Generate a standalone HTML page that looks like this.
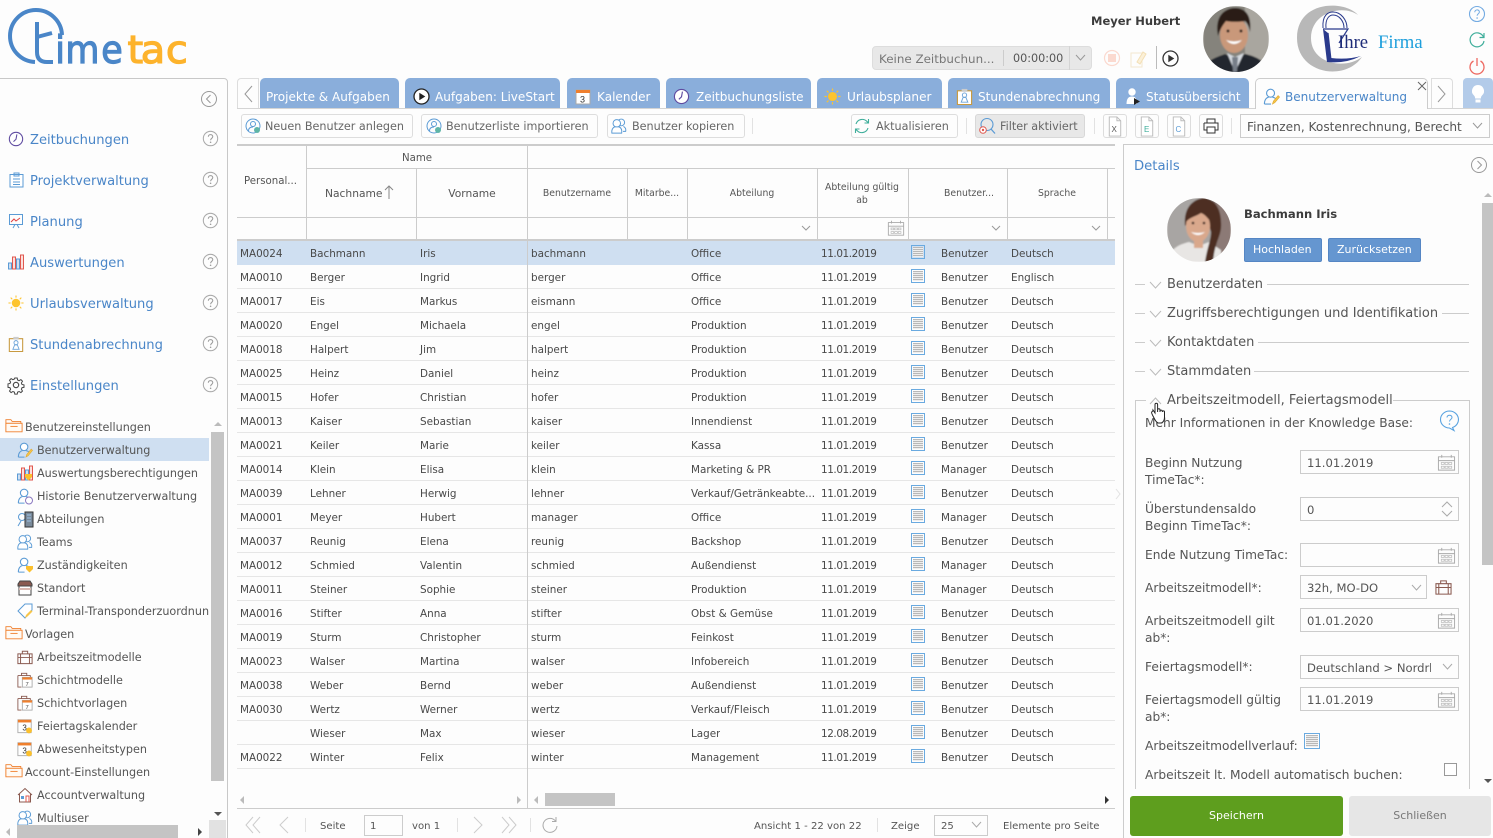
<!DOCTYPE html>
<html lang="de"><head><meta charset="utf-8"><title>TimeTac</title>
<style>
*{box-sizing:border-box}
html,body{margin:0;padding:0}
html{width:1493px;height:838px;overflow:hidden}
body{position:relative;width:1493px;height:838px;overflow:hidden;background:#fdfdfd;font-family:"DejaVu Sans","Liberation Sans",sans-serif;color:#444;font-size:11px}
.t{position:absolute;white-space:nowrap;line-height:16px;height:16px;margin-top:1px}
.b{position:absolute}
svg{position:absolute;overflow:visible}
.nav{font-size:13.1px;color:#4a86c8;left:30px;margin-top:2px}
.tr1{left:25px;font-size:11.2px;color:#555}
.tr2{left:37px;font-size:11.2px;color:#555}
.tab{position:absolute;top:78px;height:30px;background:#8aaedb;border-radius:5px 5px 0 0}
.tt{position:absolute;top:89px;color:#fff;font-size:12.05px;line-height:16px;white-space:nowrap}
.btn{position:absolute;top:114px;height:24px;border:1px solid #ddd;border-radius:3px;background:#fdfdfd}
.bt{font-size:11.2px;color:#666;top:118px}
.sep{position:absolute;width:1px;background:#e2e2e2}
.hl{position:absolute;height:1px;background:#ccc}
.vl{position:absolute;width:1px;background:#ccc}
.h{font-size:9.6px;color:#555;text-align:center;transform:translateX(-50%)}
.r{position:absolute;left:237px;width:878px;height:24px;border-bottom:1px solid #e6e6e6;font-size:10.4px;color:#484848}
.r span{position:absolute;top:4px;margin-top:1px;line-height:16px;white-space:nowrap}
.r span:nth-child(1){left:3px}
.r span:nth-child(2){left:73px}
.r span:nth-child(3){left:183px}
.r span:nth-child(4){left:294px}
.r span:nth-child(5){left:454px;max-width:124px;overflow:hidden}
.r span:nth-child(6){left:584px;letter-spacing:-.4px}
.r span:nth-child(7){left:674px;top:3px;width:14px;height:14px;border:1.4px solid #6aaae0;background:repeating-linear-gradient(#eee 0 1px,#b8b8b8 1px 2px);background-clip:content-box;padding:1px}
.r span:nth-child(8){left:704px}
.r span:nth-child(9){left:774px}
.sel{background:#cfdff1;border-bottom:0}
.sec{font-size:13px;color:#555;left:1167px}
.lb{font-size:12.2px;color:#555;left:1145px;line-height:17px;white-space:nowrap;position:absolute;margin-top:1px}
.in{position:absolute;left:1300px;width:159px;height:24px;border:1px solid #ccc;background:#fdfdfd;font-size:11.6px;color:#555;padding:0 6px;line-height:24px;white-space:nowrap;overflow:hidden}
.pg{font-size:10.1px;color:#555;top:817px;margin-top:2px}
</style></head>
<body>
<svg width="0" height="0" style="position:absolute">
<defs>
<filter id="soft"><feGaussianBlur stdDeviation=".7"/></filter>
<symbol id="q" viewBox="0 0 18 18"><circle cx="9" cy="9" r="7.6" fill="none" stroke="#aaa" stroke-width="1.1"/><path d="M6.7 7.2c0-3 4.7-3 4.7-.2 0 1.800-2.300 1.800-2.300 3.900" fill="none" stroke="#999" stroke-width="1.100"/><circle cx="9.100" cy="13" r=".8" fill="#999"/></symbol>
<symbol id="cal" viewBox="0 0 20 20"><path d="M1.500 4h17v14h-17zM1.500 8h17M5 2v3M15 2v3" fill="none" stroke="#aaa" stroke-width="1"/><path d="M4.500 10h3v2h-3zM8.500 10h3v2h-3zM12.500 10h3v2h-3zM4.500 14h3v2h-3zM8.500 14h3v2h-3zM12.500 14h3v2h-3z" fill="none" stroke="#bbb" stroke-width=".8"/></symbol>
<symbol id="u" viewBox="0 0 18 18"><circle cx="8" cy="5.500" r="4.200" fill="#fff" stroke="#5b9bd5" stroke-width="1.200"/><path d="M1.500 17c0-5 2.500-7 4.500-7.300M10 9.700c2 .3 4 1.500 4.500 3.500M1.500 17h7" fill="none" stroke="#5b9bd5" stroke-width="1.200"/></symbol>
<symbol id="uu" viewBox="0 0 18 18"><circle cx="11.500" cy="5" r="3.800" fill="none" stroke="#5b9bd5" stroke-width="1.100"/><path d="M14 9.500c2 1 3 3 2.500 5.500h-3" fill="none" stroke="#5b9bd5" stroke-width="1.100"/><circle cx="6.500" cy="6" r="4.200" fill="#fff" stroke="#5b9bd5" stroke-width="1.100"/><path d="M1 17c-.5-4 1-6 3-7h5c2.500 1 3.500 3.500 3 7z" fill="#fff" stroke="#5b9bd5" stroke-width="1.100"/></symbol>
<symbol id="pen" viewBox="0 0 18 18"><path d="M10 17l1-3 5-6 1.500 1.500-5 6z" fill="#f7c64a" stroke="#e0a930" stroke-width=".7"/></symbol>
<symbol id="fo" viewBox="0 0 20 16"><path d="M1 15V1.500h5.500L8 3.500h9.500V5" fill="none" stroke="#ef7f2d" stroke-width="1"/><path d="M1 5.500h18V15H1z" fill="#fffaf4" stroke="#ef7f2d" stroke-width="1"/><path d="M6 9h8" stroke="#ef7f2d" stroke-width="1"/></symbol>
<symbol id="case" viewBox="0 0 18 16"><path d="M1 4.500h16v11H1zM6 4.500V1.500h6v3M1 8.500h16M4 4.500v11M14 4.500v11" fill="none" stroke="#8a5a50" stroke-width="1.100"/></symbol>
<symbol id="sch" viewBox="0 0 18 18"><path d="M1 4h14v3M1 4v13h4M5 4V1.500h6V4" fill="none" stroke="#8a5a50" stroke-width="1"/><rect x="6" y="6" width="11" height="11" fill="#fff" stroke="#aaa"/><rect x="6" y="6" width="11" height="2.500" fill="#ef7f2d"/><text x="9.500" y="15.500" font-size="6.500" fill="#444" font-family="Liberation Sans">7</text></symbol>
<symbol id="fei" viewBox="0 0 18 18"><rect x="1" y="2" width="15" height="14.500" fill="#fff" stroke="#aaa"/><rect x="1" y="2" width="15" height="3" fill="#ef7f2d"/><text x="6" y="14" font-size="9" fill="#333" font-family="Liberation Sans">3</text><circle cx="13.500" cy="14" r="3.300" fill="#fbc02d"/></symbol>
<symbol id="doc" viewBox="0 0 18 22"><path d="M3 1h8l4 4v16H3z" fill="#fff" stroke="#bbb"/><path d="M11 1v4h4" fill="none" stroke="#bbb"/></symbol>
<symbol id="sun" viewBox="0 0 18 18"><circle cx="9" cy="9" r="4.800" fill="#fdc42d"/><path d="M9 .5v2.500M9 15v2.500M.5 9H3M15 9h2.500M3 3l1.800 1.800M13.200 13.200L15 15M3 15l1.800-1.800M13.200 4.800L15 3" stroke="#fdc42d" stroke-width="1.200"/></symbol>
<symbol id="clk" viewBox="0 0 18 18"><circle cx="9" cy="9" r="7.500" fill="#fff" stroke="#5f4ba0" stroke-width="1.200"/><path d="M10 3.800L9 9.300 6.200 12" fill="none" stroke="#5f4ba0" stroke-width="1.200"/></symbol>
<symbol id="stu" viewBox="0 0 18 18"><path d="M1.500 3h15v14.500h-15z" fill="#fff" stroke="#c89a40" stroke-width="1.200"/><rect x="6" y="1" width="6" height="3" fill="#ccc"/><circle cx="9" cy="7.500" r="2.300" fill="none" stroke="#6ba3d8"/><path d="M5.500 15l2-5h3l2 5z" fill="none" stroke="#6ba3d8"/></symbol>
</defs></svg>

<!-- logo -->
<svg style="left:0;top:0" width="200" height="75"><path d="M35 62A26 26 0 1 1 62 35" fill="none" stroke="#4a86c8" stroke-width="4"/><path d="M37 22V52q0 10 10 10h6M37 37l15-4" fill="none" stroke="#4a86c8" stroke-width="4"/><text transform="translate(0,63) scale(.92,1)" font-size="38" font-family="DejaVu Sans" stroke-width="1.200" fill="#4a86c8" stroke="#4a86c8" x="60 71 110">ime</text><text transform="translate(0,63) scale(1.05,1)" font-size="38" font-family="DejaVu Sans" stroke-width="1.200" fill="#fdb32c" stroke="#fdb32c" x="121.400 134 158">tac</text></svg>

<!-- top right -->
<span class="t" style="left:1091px;top:12px;font-size:11.500px;font-weight:bold;color:#3c3c3c">Meyer Hubert</span>
<div class="b" style="left:872px;top:46px;width:220px;height:24px;background:#e8e8e8;border:1px solid #ddd;border-radius:4px"></div>
<span class="t" style="left:879px;top:50px;font-size:11.900px;color:#777">Keine Zeitbuchun...</span>
<div class="sep" style="left:1003px;top:50px;height:16px;background:#ccc"></div>
<span class="t" style="left:1013px;top:50px;font-size:11.200px;color:#555">00:00:00</span>
<div class="sep" style="left:1069px;top:46px;height:24px;background:#d4d4d4"></div>
<svg style="left:1075px;top:54px" width="11" height="8"><path d="M1 1l4.500 5L10 1" fill="none" stroke="#999"/></svg>
<svg style="left:1103px;top:49px" width="18" height="18"><circle cx="9" cy="9" r="7.500" fill="none" stroke="#fbd9cf" stroke-width="1.200"/><rect x="5" y="5" width="8" height="8" fill="#fbd9cf"/></svg>
<svg style="left:1129px;top:50px" width="18" height="18"><path d="M2 3h7l4 0v14H2z" fill="none" stroke="#f3e8d0"/><path d="M8 12L14 2l3 2-6 10z" fill="#fbf0d8" stroke="#f3dfb5"/></svg>
<div class="sep" style="left:1156px;top:46px;height:23px;background:#bbb"></div>
<svg style="left:1162px;top:50px" width="17" height="17"><circle cx="8.500" cy="8.500" r="7.500" fill="none" stroke="#333" stroke-width="1.300"/><path d="M6.300 4.800l6 3.700-6 3.700z" fill="#333"/></svg>
<!-- man photo -->
<svg style="left:1203px;top:6px" width="66" height="66"><defs><clipPath id="c1"><circle cx="33" cy="33" r="33"/></clipPath></defs><g clip-path="url(#c1)"><g filter="url(#soft)"><rect width="66" height="66" fill="#85837c"/><rect x="42" width="24" height="66" fill="#a9a69f"/><path d="M-2 68c0-12 16-17 24-20l10 5 10-5c10 2 24 8 24 20z" fill="#23262d"/><path d="M24 47l8 19 9-19-9 4z" fill="#d5dae0"/><path d="M29 51h6l-1 15h-4z" fill="#777e88"/><ellipse cx="31" cy="29" rx="14" ry="18" fill="#c9987a"/><path d="M15 30C11 10 22 2 32 2c11 0 17 8 15 24-1-6-3-9-5-11-6 1-14 1-19 0-3 4-6 8-8 15z" fill="#2c1e18"/><path d="M23 34q8 8 16 0-8 3-16 0z" fill="#fff"/><circle cx="25" cy="25" r="1.500" fill="#2c1e18"/><circle cx="38" cy="25" r="1.500" fill="#2c1e18"/></g></g></svg>
<!-- company logo -->
<svg style="left:1295px;top:2px" width="135" height="90"><path d="M63 13C50-2 2-2 2 36c0 36 48 44 65 19-17 13-51 7-51-19 0-26 32-34 47-23z" fill="#b8b8b8"/><path d="M28 26C27 12 34 10 38 10c8 0 14 8 14 16M31 26c-1-10 4-13 7-13 6 0 11 6 11 13" fill="none" stroke="#2a3a8c" stroke-width="1"/><path d="M28 27h25l-9 14M33 31l3 27" fill="none" stroke="#2a3a8c" stroke-width="1.200"/><path d="M28 27l4 33q18 2 34-6-14 4-30 2l-3-25z" fill="#2a3a8c"/><text x="43" y="46" font-family="Liberation Serif" font-size="18.700" fill="#1d2b78">Ihre</text><text x="83" y="46" font-family="Liberation Serif" font-size="18.700" fill="#1e9fdc">Firma</text></svg>
<svg style="left:1468px;top:5px" width="18" height="18"><circle cx="9" cy="9" r="7.500" fill="none" stroke="#74abe2" stroke-width="1.100"/><path d="M6.800 7.200c0-3 4.600-3 4.600-.2 0 1.800-2.300 1.800-2.300 3.800" fill="none" stroke="#74abe2"/><circle cx="9.100" cy="13" r=".8" fill="#74abe2"/></svg>
<svg style="left:1468px;top:31px" width="18" height="18"><path d="M15.500 6A7 7 0 1 0 16 10M16 2v4.500h-4.500" fill="none" stroke="#3fae9b" stroke-width="1.200"/></svg>
<svg style="left:1468px;top:57px" width="18" height="18"><path d="M5.500 4A7 7 0 1 0 12.500 4M9 1v8" fill="none" stroke="#ee6a62" stroke-width="1.300"/></svg>

<!-- sidebar frame -->
<div class="b" style="left:-4px;top:78px;width:232px;height:770px;border:1px solid #c8c8c8;border-radius:4px"></div>
<svg style="left:201px;top:91px" width="16" height="16"><circle cx="8" cy="8" r="7.500" fill="none" stroke="#999"/><path d="M9.500 4L5.500 8l4 4" fill="none" stroke="#999"/></svg>

<svg style="left:8px;top:131px" width="16" height="16"><use href="#clk"/></svg><span class="t nav" style="top:131px">Zeitbuchungen</span>
<svg style="left:9px;top:172px" width="15" height="16"><path d="M1 2.500h13V15H1zM5 1h5v3H5zM4 7h7M4 10h7M4 12.500h7" fill="#fff" stroke="#5b9bd5"/></svg><span class="t nav" style="top:172px">Projektverwaltung</span>
<svg style="left:8px;top:213px" width="16" height="16"><path d="M1.500 1.500h13v10h-13zM5 15l2-3.500M11 15l-2-3.500" fill="none" stroke="#5b9bd5"/><path d="M3 9l3-3 2 2 4-3" fill="none" stroke="#e04040"/></svg><span class="t nav" style="top:213px">Planung</span>
<svg style="left:8px;top:254px" width="16" height="16"><path d="M.5 9h3v6h-3zM8.500 5h3v10h-3z" fill="#cfdff1" stroke="#5b9bd5"/><path d="M4.500 3h3v12h-3zM12.500 1h3v14h-3z" fill="#fde0dc" stroke="#e0584f"/></svg><span class="t nav" style="top:254px">Auswertungen</span>
<svg style="left:8px;top:295px" width="16" height="16"><use href="#sun"/></svg><span class="t nav" style="top:295px">Urlaubsverwaltung</span>
<svg style="left:8px;top:336px" width="16" height="16"><use href="#stu"/></svg><span class="t nav" style="top:336px">Stundenabrechnung</span>
<svg style="left:8px;top:377px" width="16" height="16"><circle cx="8" cy="8" r="2.700" fill="none" stroke="#444" stroke-width="1.100"/><path d="M6.800 1h2.400l.4 2 1.500.7 1.800-1.100 1.600 1.600-1.100 1.800.6 1.500 2 .4v2.400l-2 .4-.6 1.500 1.100 1.800-1.600 1.600-1.800-1.100-1.500.6-.4 2H6.800l-.4-2-1.500-.6-1.800 1.100-1.600-1.600 1.100-1.800-.6-1.500-2-.4V6.900l2-.4.600-1.500L1.500 3.200l1.600-1.600 1.800 1.100 1.500-.7z" fill="none" stroke="#444" stroke-width="1"/></svg><span class="t nav" style="top:377px">Einstellungen</span>
<svg style="left:202px;top:130px" width="17" height="17"><use href="#q"/></svg>
<svg style="left:202px;top:171px" width="17" height="17"><use href="#q"/></svg>
<svg style="left:202px;top:212px" width="17" height="17"><use href="#q"/></svg>
<svg style="left:202px;top:253px" width="17" height="17"><use href="#q"/></svg>
<svg style="left:202px;top:294px" width="17" height="17"><use href="#q"/></svg>
<svg style="left:202px;top:335px" width="17" height="17"><use href="#q"/></svg>
<svg style="left:202px;top:376px" width="17" height="17"><use href="#q"/></svg>

<!-- tree -->
<div class="b" style="left:0;top:438px;width:209px;height:23px;background:#cfdff1"></div>
<div class="b" style="left:0;top:415px;width:209px;height:410px;overflow:hidden">
<svg style="left:5px;top:3px" width="18" height="15"><use href="#fo"/></svg><span class="t tr1" style="top:4px">Benutzereinstellungen</span>
<svg style="left:17px;top:27px" width="16" height="16"><use href="#u"/></svg><svg style="left:17px;top:27px" width="16" height="16"><use href="#pen"/></svg><span class="t tr2" style="top:27px">Benutzerverwaltung</span>
<svg style="left:17px;top:50px" width="16" height="16"><path d="M.5 9h3v6h-3zM8.500 5h3v10h-3z" fill="#cfdff1" stroke="#5b9bd5"/><path d="M4.500 3h3v12h-3zM12.500 1h3v14h-3z" fill="#fde0dc" stroke="#e0584f"/><path d="M8 9h7v3l-3.500 3.500L8 12z" fill="#fbc02d"/></svg><span class="t tr2" style="top:50px">Auswertungsberechtigungen</span>
<svg style="left:17px;top:73px" width="16" height="16"><use href="#u"/><circle cx="12" cy="12.500" r="3.500" fill="#fff" stroke="#8a78c0"/></svg><span class="t tr2" style="top:73px">Historie Benutzerverwaltung</span>
<svg style="left:17px;top:96px" width="16" height="16"><circle cx="5" cy="6" r="3.500" fill="none" stroke="#5b9bd5"/><path d="M1 15l3-5" stroke="#5b9bd5"/><rect x="8" y="1" width="8" height="15" fill="#7a8a9a" stroke="#333"/><path d="M10 4h4M10 7h4M10 10h4" stroke="#9ec3e6"/></svg><span class="t tr2" style="top:96px">Abteilungen</span>
<svg style="left:17px;top:119px" width="16" height="16"><use href="#uu"/></svg><span class="t tr2" style="top:119px">Teams</span>
<svg style="left:17px;top:142px" width="16" height="16"><use href="#u"/><path d="M9 9h7v3l-3.500 3.500L9 12z" fill="#fbc02d"/></svg><span class="t tr2" style="top:142px">Zuständigkeiten</span>
<svg style="left:17px;top:165px" width="16" height="16"><path d="M1 4l2-3h10l2 3v2H1z" fill="#8a5a50" stroke="#444"/><path d="M2 6h12v9H2z" fill="#fff" stroke="#444"/><rect x="2" y="8" width="12" height="2" fill="#d9b8b0"/></svg><span class="t tr2" style="top:165px">Standort</span>
<svg style="left:17px;top:188px" width="16" height="16"><path d="M1 8l7-7h7v6l-7 8z" fill="#fff" stroke="#5b9bd5"/><path d="M8 15l1-3 5-5 1.500 1.500-5 5z" fill="#f7c64a"/></svg><span class="t tr2" style="top:188px">Terminal-Transponderzuordnung</span>
<svg style="left:5px;top:210px" width="18" height="15"><use href="#fo"/></svg><span class="t tr1" style="top:211px">Vorlagen</span>
<svg style="left:17px;top:234px" width="16" height="16"><use href="#case"/></svg><span class="t tr2" style="top:234px">Arbeitszeitmodelle</span>
<svg style="left:17px;top:257px" width="16" height="16"><use href="#sch"/></svg><span class="t tr2" style="top:257px">Schichtmodelle</span>
<svg style="left:17px;top:280px" width="16" height="16"><use href="#sch"/></svg><span class="t tr2" style="top:280px">Schichtvorlagen</span>
<svg style="left:17px;top:303px" width="16" height="16"><use href="#fei"/></svg><span class="t tr2" style="top:303px">Feiertagskalender</span>
<svg style="left:17px;top:326px" width="16" height="16"><use href="#fei"/></svg><span class="t tr2" style="top:326px">Abwesenheitstypen</span>
<svg style="left:5px;top:348px" width="18" height="15"><use href="#fo"/></svg><span class="t tr1" style="top:349px">Account-Einstellungen</span>
<svg style="left:17px;top:372px" width="16" height="16"><path d="M1 8l7-6.500L15 8M2.500 7v8h11V7" fill="#fff" stroke="#8a5a50"/><rect x="4" y="9" width="3" height="3" fill="#5b9bd5"/><path d="M9 15V9h3v6" fill="none" stroke="#e0584f"/></svg><span class="t tr2" style="top:372px">Accountverwaltung</span>
<svg style="left:17px;top:395px" width="16" height="16"><use href="#uu"/></svg><span class="t tr2" style="top:395px">Multiuser</span>
</div>
<div class="b" style="left:211px;top:432px;width:13px;height:349px;background:#c4c4c4"></div>
<svg style="left:213px;top:421px" width="10" height="6"><path d="M1 5l4-4 4 4z" fill="#bbb"/></svg>
<svg style="left:213px;top:811px" width="10" height="6"><path d="M1 1l4 4 4-4z" fill="#555"/></svg>
<div class="b" style="left:17px;top:825px;width:161px;height:13px;background:#c4c4c4"></div>
<div class="b" style="left:209px;top:820px;width:17px;height:18px;background:#e2e2e2"></div>
<svg style="left:5px;top:827px" width="6" height="10"><path d="M5 1L1 5l4 4z" fill="#bbb"/></svg>
<svg style="left:197px;top:827px" width="6" height="10"><path d="M1 1l4 4-4 4z" fill="#444"/></svg>

<!-- tabs -->
<div class="b" style="left:237px;top:78px;width:22px;height:31px;border:1px solid #ddd;border-bottom:0;border-radius:4px 0 0 0"></div>
<svg style="left:243px;top:85px" width="10" height="18"><path d="M9 1L2 9l7 8" fill="none" stroke="#999" stroke-width="1"/></svg>
<div class="tab" style="left:260px;width:139px"></div><span class="tt" style="left:266px">Projekte &amp; Aufgaben</span>
<div class="tab" style="left:405px;width:155px"></div><span class="tt" style="left:435px">Aufgaben: LiveStart</span>
<svg style="left:413px;top:88px" width="17" height="17"><circle cx="8.500" cy="8.500" r="7.500" fill="#fff" stroke="#222" stroke-width="1.300"/><path d="M6.300 4.800l6 3.700-6 3.700z" fill="#222"/></svg>
<div class="tab" style="left:567px;width:93px"></div><span class="tt" style="left:597px">Kalender</span>
<svg style="left:575px;top:89px" width="16" height="16"><rect x="1" y="1" width="14" height="14" fill="#fff" stroke="#aaa"/><rect x="1" y="1" width="14" height="3" fill="#ef7f2d"/><text x="5" y="13.500" font-size="9" fill="#333" font-family="Liberation Sans">3</text></svg>
<div class="tab" style="left:666px;width:145px"></div><span class="tt" style="left:696px">Zeitbuchungsliste</span>
<svg style="left:673px;top:88px" width="17" height="17"><use href="#clk"/></svg>
<div class="tab" style="left:817px;width:125px"></div><span class="tt" style="left:847px">Urlaubsplaner</span>
<svg style="left:824px;top:88px" width="17" height="17"><use href="#sun"/></svg>
<div class="tab" style="left:948px;width:162px"></div><span class="tt" style="left:978px">Stundenabrechnung</span>
<svg style="left:956px;top:88px" width="17" height="17"><use href="#stu"/></svg>
<div class="tab" style="left:1116px;width:133px"></div><span class="tt" style="left:1146px">Statusübersicht</span>
<svg style="left:1124px;top:87px" width="17" height="18"><circle cx="8" cy="5" r="3.700" fill="#fff"/><path d="M2.500 17c0-6 2.500-7.500 5.500-7.500s5 1.500 5 7.500z" fill="#fff"/><path d="M10 11l6 3.500-6 3.500z" fill="#222"/></svg>
<div class="b" style="left:1255px;top:78px;width:173px;height:31px;background:#fdfdfd;border:1px solid #ccc;border-bottom:0;border-radius:5px 5px 0 0"></div>
<svg style="left:1263px;top:88px" width="17" height="17"><use href="#u"/><use href="#pen"/></svg>
<span class="tt" style="left:1285px;color:#4a86c8">Benutzerverwaltung</span>
<svg style="left:1417px;top:81px" width="10" height="10"><path d="M1 1l8 8M9 1l-8 8" stroke="#666"/></svg>
<div class="b" style="left:1431px;top:78px;width:22px;height:31px;border:1px solid #ddd;border-bottom:0;border-radius:0 4px 0 0"></div>
<svg style="left:1437px;top:85px" width="10" height="18"><path d="M1 1l7 8-7 8" fill="none" stroke="#999"/></svg>
<div class="b" style="left:1463px;top:78px;width:30px;height:31px;background:#b3cbe9;border-radius:4px 4px 0 0"></div>
<svg style="left:1470px;top:84px" width="16" height="20"><path d="M8 1a6 6 0 0 0-4 10.500c1 1 1 2 1.200 3h5.600c.2-1 .2-2 1.200-3A6 6 0 0 0 8 1z" fill="#fff"/><rect x="5.500" y="15.500" width="5" height="3" fill="#fff"/></svg>
<div class="hl" style="left:237px;top:108px;width:1018px;background:#d4d4d4"></div>
<div class="hl" style="left:1428px;top:108px;width:65px;background:#d4d4d4"></div>

<!-- toolbar -->
<div class="btn" style="left:241px;width:172px"></div>
<svg style="left:245px;top:118px" width="16" height="16"><circle cx="8" cy="8" r="7" fill="none" stroke="#5b9bd5"/><circle cx="8" cy="6" r="2.500" fill="none" stroke="#5b9bd5"/><path d="M3.500 13c0-3 2-4 4.500-4" fill="none" stroke="#5b9bd5"/><circle cx="12" cy="12" r="3" fill="#5fb5a8"/></svg>
<span class="t bt" style="left:265px">Neuen Benutzer anlegen</span>
<div class="btn" style="left:421px;width:177px"></div>
<svg style="left:426px;top:118px" width="16" height="16"><circle cx="8" cy="8" r="7" fill="none" stroke="#5b9bd5"/><circle cx="8" cy="6" r="2.500" fill="none" stroke="#5b9bd5"/><path d="M3.500 13c0-3 2-4 4.500-4" fill="none" stroke="#5b9bd5"/><circle cx="12" cy="12" r="3" fill="#5fb5a8"/></svg>
<span class="t bt" style="left:446px">Benutzerliste importieren</span>
<div class="btn" style="left:607px;width:138px"></div>
<svg style="left:611px;top:118px" width="16" height="16"><use href="#uu"/></svg>
<span class="t bt" style="left:632px">Benutzer kopieren</span>
<div class="sep" style="left:752px;top:118px;height:16px"></div>
<div class="btn" style="left:851px;width:107px"></div>
<svg style="left:853px;top:117px" width="18" height="18"><path d="M3 7a6.500 6.500 0 0 1 11-2.500l1.500 1.500M15.500 2v4h-4M15 11a6.500 6.500 0 0 1-11 2.500L2.500 12M2.500 16v-4h4" fill="none" stroke="#3fae9b" stroke-width="1.100"/></svg>
<span class="t bt" style="left:876px">Aktualisieren</span>
<div class="sep" style="left:966px;top:118px;height:16px"></div>
<div class="btn" style="left:975px;width:110px;background:#e8e8e8;border-color:#d8d8d8"></div>
<svg style="left:978px;top:117px" width="18" height="18"><circle cx="9" cy="7.500" r="6" fill="none" stroke="#5b9bd5" stroke-width="1.100"/><path d="M13 12l4 4.500" stroke="#5b9bd5" stroke-width="1.300"/><circle cx="5" cy="13" r="3.300" fill="#fff" stroke="#e0584f"/><circle cx="5" cy="13" r="1.200" fill="#e0584f"/></svg>
<span class="t bt" style="left:1000px">Filter aktiviert</span>
<div class="sep" style="left:1094px;top:118px;height:16px"></div>
<div class="btn" style="left:1103px;width:24px"></div><svg style="left:1106px;top:116px" width="18" height="21"><use href="#doc"/><text x="5.500" y="16" font-size="8" fill="#555" font-family="Liberation Sans">X</text></svg>
<div class="btn" style="left:1135px;width:24px"></div><svg style="left:1138px;top:116px" width="18" height="21"><use href="#doc"/><text x="6" y="16" font-size="8" fill="#3fae9b" font-family="Liberation Sans">E</text></svg>
<div class="btn" style="left:1167px;width:24px"></div><svg style="left:1170px;top:116px" width="18" height="21"><use href="#doc"/><text x="5.500" y="16" font-size="8" fill="#5b9bd5" font-family="Liberation Sans">C</text></svg>
<div class="btn" style="left:1199px;width:24px"></div><svg style="left:1203px;top:118px" width="16" height="16"><path d="M4 5V1h8v4M1 5h14v7h-3M4 12H1V5M4 9h8v6H4z" fill="#fff" stroke="#333"/></svg>
<div class="sep" style="left:1231px;top:118px;height:16px"></div>
<div class="b" style="left:1240px;top:114px;width:250px;height:24px;border:1px solid #ccc"></div>
<span class="t" style="left:1247px;top:118px;font-size:12.150px;color:#555">Finanzen, Kostenrechnung, Berecht</span>
<svg style="left:1472px;top:122px" width="11" height="8"><path d="M1 1l4.500 5L10 1" fill="none" stroke="#999"/></svg>

<!-- grid header -->
<div class="hl" style="left:237px;top:144px;width:878px;height:2px"></div>
<div class="hl" style="left:306px;top:168px;width:809px"></div>
<div class="hl" style="left:237px;top:217px;width:878px"></div>
<div class="hl" style="left:237px;top:239px;width:878px;height:2px"></div>
<div class="vl" style="left:306px;top:145px;height:95px"></div>
<div class="vl" style="left:416px;top:169px;height:71px"></div>
<div class="vl" style="left:527px;top:145px;height:663px"></div>
<div class="vl" style="left:627px;top:169px;height:71px"></div>
<div class="vl" style="left:687px;top:169px;height:71px"></div>
<div class="vl" style="left:817px;top:169px;height:71px"></div>
<div class="vl" style="left:908px;top:169px;height:71px"></div>
<div class="vl" style="left:1007px;top:169px;height:71px"></div>
<div class="vl" style="left:1107px;top:169px;height:71px"></div>
<span class="t" style="left:244px;top:173px;font-size:10.200px;color:#555">Personal...</span>
<span class="t h" style="left:417px;top:150px;font-size:10.200px">Name</span>
<span class="t" style="left:325px;top:185px;font-size:10.700px;color:#555">Nachname</span>
<svg style="left:384px;top:184px" width="10" height="16"><path d="M5 15V2M1 6l4-4 4 4" fill="none" stroke="#888"/></svg>
<span class="t h" style="left:472px;top:185px;font-size:10.700px">Vorname</span>
<span class="t h" style="left:577px;top:185px;font-size:9.300px">Benutzername</span>
<span class="t h" style="left:657px;top:185px;font-size:9.300px">Mitarbe...</span>
<span class="t h" style="left:752px;top:185px;font-size:9.300px">Abteilung</span>
<span class="t h" style="left:862px;top:179px;font-size:9.300px">Abteilung gültig</span>
<span class="t h" style="left:862px;top:192px;font-size:9.300px">ab</span>
<span class="t h" style="left:969px;top:185px;font-size:9.300px">Benutzer...</span>
<span class="t h" style="left:1057px;top:185px;font-size:9.300px">Sprache</span>
<svg style="left:801px;top:225px" width="10" height="7"><path d="M1 1l4 4 4-4" fill="none" stroke="#999"/></svg>
<svg style="left:991px;top:225px" width="10" height="7"><path d="M1 1l4 4 4-4" fill="none" stroke="#999"/></svg>
<svg style="left:1091px;top:225px" width="10" height="7"><path d="M1 1l4 4 4-4" fill="none" stroke="#999"/></svg>
<svg style="left:887px;top:219px" width="18" height="18"><use href="#cal"/></svg>

<!-- rows -->
<div class="r sel" style="top:241px"><span>MA0024</span><span>Bachmann</span><span>Iris</span><span>bachmann</span><span>Office</span><span>11.01.2019</span><span></span><span>Benutzer</span><span>Deutsch</span></div>
<div class="r" style="top:265px"><span>MA0010</span><span>Berger</span><span>Ingrid</span><span>berger</span><span>Office</span><span>11.01.2019</span><span></span><span>Benutzer</span><span>Englisch</span></div>
<div class="r" style="top:289px"><span>MA0017</span><span>Eis</span><span>Markus</span><span>eismann</span><span>Office</span><span>11.01.2019</span><span></span><span>Benutzer</span><span>Deutsch</span></div>
<div class="r" style="top:313px"><span>MA0020</span><span>Engel</span><span>Michaela</span><span>engel</span><span>Produktion</span><span>11.01.2019</span><span></span><span>Benutzer</span><span>Deutsch</span></div>
<div class="r" style="top:337px"><span>MA0018</span><span>Halpert</span><span>Jim</span><span>halpert</span><span>Produktion</span><span>11.01.2019</span><span></span><span>Benutzer</span><span>Deutsch</span></div>
<div class="r" style="top:361px"><span>MA0025</span><span>Heinz</span><span>Daniel</span><span>heinz</span><span>Produktion</span><span>11.01.2019</span><span></span><span>Benutzer</span><span>Deutsch</span></div>
<div class="r" style="top:385px"><span>MA0015</span><span>Hofer</span><span>Christian</span><span>hofer</span><span>Produktion</span><span>11.01.2019</span><span></span><span>Benutzer</span><span>Deutsch</span></div>
<div class="r" style="top:409px"><span>MA0013</span><span>Kaiser</span><span>Sebastian</span><span>kaiser</span><span>Innendienst</span><span>11.01.2019</span><span></span><span>Benutzer</span><span>Deutsch</span></div>
<div class="r" style="top:433px"><span>MA0021</span><span>Keiler</span><span>Marie</span><span>keiler</span><span>Kassa</span><span>11.01.2019</span><span></span><span>Benutzer</span><span>Deutsch</span></div>
<div class="r" style="top:457px"><span>MA0014</span><span>Klein</span><span>Elisa</span><span>klein</span><span>Marketing &amp; PR</span><span>11.01.2019</span><span></span><span>Manager</span><span>Deutsch</span></div>
<div class="r" style="top:481px"><span>MA0039</span><span>Lehner</span><span>Herwig</span><span>lehner</span><span>Verkauf/Getränkeabte...</span><span>11.01.2019</span><span></span><span>Benutzer</span><span>Deutsch</span></div>
<div class="r" style="top:505px"><span>MA0001</span><span>Meyer</span><span>Hubert</span><span>manager</span><span>Office</span><span>11.01.2019</span><span></span><span>Manager</span><span>Deutsch</span></div>
<div class="r" style="top:529px"><span>MA0037</span><span>Reunig</span><span>Elena</span><span>reunig</span><span>Backshop</span><span>11.01.2019</span><span></span><span>Benutzer</span><span>Deutsch</span></div>
<div class="r" style="top:553px"><span>MA0012</span><span>Schmied</span><span>Valentin</span><span>schmied</span><span>Außendienst</span><span>11.01.2019</span><span></span><span>Manager</span><span>Deutsch</span></div>
<div class="r" style="top:577px"><span>MA0011</span><span>Steiner</span><span>Sophie</span><span>steiner</span><span>Produktion</span><span>11.01.2019</span><span></span><span>Manager</span><span>Deutsch</span></div>
<div class="r" style="top:601px"><span>MA0016</span><span>Stifter</span><span>Anna</span><span>stifter</span><span>Obst &amp; Gemüse</span><span>11.01.2019</span><span></span><span>Benutzer</span><span>Deutsch</span></div>
<div class="r" style="top:625px"><span>MA0019</span><span>Sturm</span><span>Christopher</span><span>sturm</span><span>Feinkost</span><span>11.01.2019</span><span></span><span>Benutzer</span><span>Deutsch</span></div>
<div class="r" style="top:649px"><span>MA0023</span><span>Walser</span><span>Martina</span><span>walser</span><span>Infobereich</span><span>11.01.2019</span><span></span><span>Benutzer</span><span>Deutsch</span></div>
<div class="r" style="top:673px"><span>MA0038</span><span>Weber</span><span>Bernd</span><span>weber</span><span>Außendienst</span><span>11.01.2019</span><span></span><span>Benutzer</span><span>Deutsch</span></div>
<div class="r" style="top:697px"><span>MA0030</span><span>Wertz</span><span>Werner</span><span>wertz</span><span>Verkauf/Fleisch</span><span>11.01.2019</span><span></span><span>Benutzer</span><span>Deutsch</span></div>
<div class="r" style="top:721px"><span></span><span>Wieser</span><span>Max</span><span>wieser</span><span>Lager</span><span>12.08.2019</span><span></span><span>Benutzer</span><span>Deutsch</span></div>
<div class="r" style="top:745px"><span>MA0022</span><span>Winter</span><span>Felix</span><span>winter</span><span>Management</span><span>11.01.2019</span><span></span><span>Benutzer</span><span>Deutsch</span></div>
<div class="vl" style="left:527px;top:241px;height:567px"></div>

<!-- grid scroll + pager -->
<div class="b" style="left:545px;top:793px;width:70px;height:13px;background:#c4c4c4"></div>
<svg style="left:240px;top:796px" width="6" height="8"><path d="M4 0L0 4l4 4z" fill="#bbb"/></svg>
<svg style="left:517px;top:796px" width="6" height="8"><path d="M0 0l4 4-4 4z" fill="#bbb"/></svg>
<svg style="left:534px;top:796px" width="6" height="8"><path d="M4 0L0 4l4 4z" fill="#bbb"/></svg>
<svg style="left:1105px;top:796px" width="6" height="8"><path d="M0 0l4 4-4 4z" fill="#333"/></svg>
<div class="hl" style="left:237px;top:808px;width:878px;height:1px"></div>
<svg style="left:244px;top:816px" width="20" height="18"><path d="M9 1L2 9l7 8M16 1L9 9l7 8" fill="none" stroke="#ccc"/></svg>
<svg style="left:278px;top:816px" width="12" height="18"><path d="M10 1L2 9l8 8" fill="none" stroke="#ccc"/></svg>
<div class="sep" style="left:305px;top:818px;height:14px"></div>
<span class="t pg" style="left:320px">Seite</span>
<div class="b" style="left:364px;top:815px;width:39px;height:21px;border:1px solid #ccc"></div>
<span class="t pg" style="left:370px;top:817px">1</span>
<span class="t pg" style="left:412px">von 1</span>
<div class="sep" style="left:457px;top:818px;height:14px"></div>
<svg style="left:472px;top:816px" width="12" height="18"><path d="M2 1l8 8-8 8" fill="none" stroke="#ccc"/></svg>
<svg style="left:500px;top:816px" width="20" height="18"><path d="M2 1l7 8-7 8M9 1l7 8-7 8" fill="none" stroke="#ccc"/></svg>
<div class="sep" style="left:530px;top:818px;height:14px"></div>
<svg style="left:541px;top:816px" width="18" height="18"><path d="M14.500 5A7 7 0 1 0 16 10M15 1v4.500h-4" fill="none" stroke="#aaa"/></svg>
<span class="t pg" style="left:754px">Ansicht 1 - 22 von 22</span>
<div class="sep" style="left:877px;top:818px;height:14px"></div>
<span class="t pg" style="left:891px">Zeige</span>
<div class="b" style="left:934px;top:815px;width:54px;height:21px;border:1px solid #ccc"></div>
<span class="t pg" style="left:941px;top:817px">25</span>
<svg style="left:971px;top:821px" width="11" height="8"><path d="M1 1l4.500 5L10 1" fill="none" stroke="#aaa"/></svg>
<span class="t pg" style="left:1003px">Elemente pro Seite</span>
<svg style="left:1116px;top:489px" width="5" height="10"><path d="M0 0l4 5-4 5" fill="none" stroke="#e2e2e2"/></svg>

<!-- details -->
<div class="hl" style="left:1123px;top:144px;width:370px;height:1px"></div>
<div class="vl" style="left:1123px;top:144px;height:694px;background:#ccc"></div>
<span class="t" style="left:1134px;top:158px;font-size:13.200px;color:#4a86c8">Details</span>
<svg style="left:1471px;top:157px" width="16" height="16"><circle cx="8" cy="8" r="7.500" fill="none" stroke="#999"/><path d="M6.500 4l4 4-4 4" fill="none" stroke="#999"/></svg>
<svg style="left:1167px;top:198px" width="64" height="64"><defs><clipPath id="c2"><circle cx="32" cy="32" r="32"/></clipPath></defs><g clip-path="url(#c2)"><g filter="url(#soft)"><rect width="64" height="64" fill="#a8a5a3"/><path d="M46 0h18v64H46z" fill="#8c7a76"/><path d="M0 64c2-14 14-18 22-20l10 4 10-4 12 8v12z" fill="#e8e6e4"/><path d="M18 28C16 6 30 0 38 0c12 2 17 14 16 30-1 10-6 14-8 34h-8c2-14 6-22 6-30l-4-14c-6 4-14 3-18 3z" fill="#4e2f24"/><ellipse cx="31" cy="28" rx="12" ry="16" fill="#d9a88c"/><path d="M19 24c1-8 8-14 14-13 5 1 9 5 10 12-3-4-6-7-9-8-4 3-11 4-15 9z" fill="#4e2f24"/><path d="M24 34q7 6 14 0-7 2-14 0z" fill="#fff"/><circle cx="26" cy="25" r="1.300" fill="#33211a"/><circle cx="37" cy="25" r="1.300" fill="#33211a"/><rect x="27" y="42" width="9" height="8" fill="#d9a88c"/></g></g></svg>
<span class="t" style="left:1244px;top:205px;font-size:11.600px;font-weight:bold;color:#3c3c3c">Bachmann Iris</span>
<div class="b" style="left:1244px;top:238px;width:78px;height:24px;background:#6596d0;border:1px solid #5586c4;border-radius:2px"></div>
<span class="t" style="left:1253px;top:241px;font-size:11px;color:#fff">Hochladen</span>
<div class="b" style="left:1328px;top:238px;width:93px;height:24px;background:#6596d0;border:1px solid #5586c4;border-radius:2px"></div>
<span class="t" style="left:1337px;top:241px;font-size:11px;color:#fff">Zurücksetzen</span>
<div class="b" style="left:1482px;top:203px;width:11px;height:362px;background:#c4c4c4"></div>
<svg style="left:1483px;top:192px" width="10" height="6"><path d="M1 5l4-4 4 4z" fill="#bbb"/></svg>
<svg style="left:1483px;top:778px" width="10" height="6"><path d="M1 1l4 4 4-4z" fill="#555"/></svg>

<div class="hl" style="left:1135px;top:284px;width:10px"></div><svg style="left:1149px;top:281px" width="13" height="8"><path d="M1 1l5.500 6L12 1" fill="none" stroke="#bbb"/></svg><span class="t sec" style="top:276px">Benutzerdaten</span><div class="hl" style="left:1267px;top:284px;width:202px"></div>
<div class="hl" style="left:1135px;top:313px;width:10px"></div><svg style="left:1149px;top:310px" width="13" height="8"><path d="M1 1l5.500 6L12 1" fill="none" stroke="#bbb"/></svg><span class="t sec" style="top:305px">Zugriffsberechtigungen und Identifikation</span><div class="hl" style="left:1442px;top:313px;width:27px"></div>
<div class="hl" style="left:1135px;top:342px;width:10px"></div><svg style="left:1149px;top:339px" width="13" height="8"><path d="M1 1l5.500 6L12 1" fill="none" stroke="#bbb"/></svg><span class="t sec" style="top:334px">Kontaktdaten</span><div class="hl" style="left:1258px;top:342px;width:211px"></div>
<div class="hl" style="left:1135px;top:371px;width:10px"></div><svg style="left:1149px;top:368px" width="13" height="8"><path d="M1 1l5.500 6L12 1" fill="none" stroke="#bbb"/></svg><span class="t sec" style="top:363px">Stammdaten</span><div class="hl" style="left:1254px;top:371px;width:215px"></div>
<div class="b" style="left:1135px;top:400px;width:335px;height:389px;border:1px solid #ccc;border-bottom:0"></div>
<div class="b" style="left:1146px;top:395px;width:247px;height:10px;background:#fdfdfd"></div>
<svg style="left:1149px;top:397px" width="13" height="8"><path d="M1 7l5.500-6L12 7" fill="none" stroke="#bbb"/></svg>
<span class="t sec" style="top:392px">Arbeitszeitmodell, Feiertagsmodell</span>
<span class="lb" style="top:414px">Mehr Informationen in der Knowledge Base:</span>
<svg style="left:1150px;top:402px" width="18" height="24"><path d="M3 8l2 3V2.500a1.300 1.300 0 0 1 2.600 0V10l0-2a1.200 1.200 0 0 1 2.400 0v2l0-1a1.200 1.200 0 0 1 2.300 0v1a1.100 1.100 0 0 1 2.200 0v5c0 3-1 5-3 6H8c-2-1-3-3-5-7-.7-1.500-1.800-3-1.300-4 .6-.8 1.300-.5 1.300-2z" fill="#fff" stroke="#222" stroke-width="1"/></svg>
<svg style="left:1439px;top:410px" width="21" height="21"><path d="M10.500 1a9 8.500 0 0 1 3 16.500L15 20.500l-4.500-2.500A9 8.500 0 1 1 10.500 1z" fill="none" stroke="#5aa3e0" stroke-width="1.100"/><path d="M8 7.500c0-3 5-3 5 0 0 2-2.500 1.800-2.500 4" fill="none" stroke="#5aa3e0"/><circle cx="10.500" cy="14" r=".8" fill="#5aa3e0"/></svg>

<span class="lb" style="top:454px">Beginn Nutzung<br>TimeTac*:</span>
<div class="in" style="top:450px;line-height:25px">11.01.2019</div><svg style="left:1437px;top:453px" width="19" height="19"><use href="#cal"/></svg>
<span class="lb" style="top:500px">Überstundensaldo<br>Beginn TimeTac*:</span>
<div class="in" style="top:497px">0</div><svg style="left:1441px;top:501px" width="12" height="16"><path d="M1 6l5-5 5 5M1 10l5 5 5-5" fill="none" stroke="#aaa"/></svg>
<span class="lb" style="top:546px">Ende Nutzung TimeTac:</span>
<div class="in" style="top:543px"></div><svg style="left:1437px;top:546px" width="19" height="19"><use href="#cal"/></svg>
<span class="lb" style="top:579px">Arbeitszeitmodell*:</span>
<div class="in" style="top:575px;width:127px;line-height:25px">32h, MO-DO</div><svg style="left:1411px;top:584px" width="11" height="8"><path d="M1 1l4.500 5L10 1" fill="none" stroke="#aaa"/></svg>
<svg style="left:1435px;top:579px" width="17" height="16"><use href="#case"/></svg>
<span class="lb" style="top:612px">Arbeitszeitmodell gilt<br>ab*:</span>
<div class="in" style="top:608px;line-height:25px">01.01.2020</div><svg style="left:1437px;top:611px" width="19" height="19"><use href="#cal"/></svg>
<span class="lb" style="top:658px">Feiertagsmodell*:</span>
<div class="in" style="top:655px"><div style="width:124px;overflow:hidden">Deutschland &gt; Nordrhein</div></div><svg style="left:1442px;top:663px" width="11" height="8"><path d="M1 1l4.500 5L10 1" fill="none" stroke="#aaa"/></svg>
<span class="lb" style="top:691px">Feiertagsmodell gültig<br>ab*:</span>
<div class="in" style="top:687px;line-height:25px">11.01.2019</div><svg style="left:1437px;top:690px" width="19" height="19"><use href="#cal"/></svg>
<span class="lb" style="top:737px">Arbeitszeitmodellverlauf:</span>
<div class="b" style="left:1304px;top:733px;width:16px;height:16px;border:1.400px solid #6aaae0;padding:1px;background:repeating-linear-gradient(#eee 0 1px,#b8b8b8 1px 2px);background-clip:content-box"></div>
<span class="lb" style="top:766px">Arbeitszeit lt. Modell automatisch buchen:</span>
<div class="b" style="left:1444px;top:763px;width:13px;height:13px;border:1px solid #999;background:#fff"></div>

<div class="b" style="left:1130px;top:796px;width:213px;height:40px;background:#5e9e1e;border-radius:3px"></div>
<span class="t" style="left:1130px;width:213px;text-align:center;top:807px;font-size:11px;color:#fff">Speichern</span>
<div class="b" style="left:1349px;top:796px;width:142px;height:40px;background:#e6e6e6;border-radius:3px"></div>
<span class="t" style="left:1349px;width:142px;text-align:center;top:807px;font-size:11px;color:#777">Schließen</span>
</body></html>
